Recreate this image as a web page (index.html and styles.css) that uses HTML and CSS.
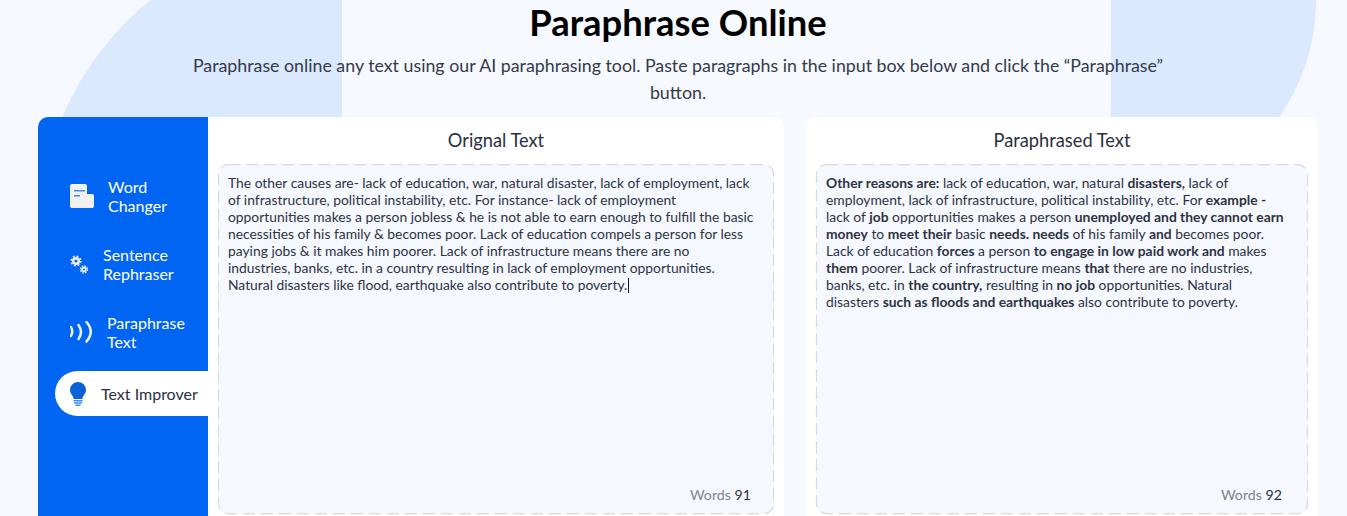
FILE: index.html
```html
<!DOCTYPE html>
<html lang="en">
<head>
<meta charset="utf-8">
<title>Paraphrase Online</title>
<link rel="stylesheet" href="styles.css">
</head>
<body>
<div class="blob blob-left"></div>
<div class="blob blob-right"></div>
<main class="page">
  <header class="hero">
    <h1>Paraphrase Online</h1>
    <p>Paraphrase online any text using our AI paraphrasing tool. Paste paragraphs in the input box below and click the “Paraphrase” button.</p>
  </header>
  <section class="tool">
    <div class="card card-left">
      <nav class="side">
        <a class="item item-word">
          <svg class="ic" width="24" height="24" viewBox="0 0 24 24"><path fill="#f1f1f1" d="M2 0h13a2 2 0 0 1 2 2v8h5a2 2 0 0 1 2 2v10a2 2 0 0 1-2 2H2a2 2 0 0 1-2-2V2a2 2 0 0 1 2-2z"/><path fill="#3f8cf5" d="M4 6h11v1.500H4zM4 11h6v1.500H4z"/></svg>
          <span>Word<br>Changer</span>
        </a>
        <a class="item item-sent">
          <svg class="ic" width="19" height="19" viewBox="0 0 19 19"><g fill="none" stroke="#f1f1f1"><circle cx="6" cy="6" r="2.800" stroke-width="2.400"/><circle cx="6" cy="6" r="4.800" stroke-width="1.600" stroke-dasharray="1.900 1.870"/><circle cx="14" cy="14.500" r="1.900" stroke-width="1.800"/><circle cx="14" cy="14.500" r="3.500" stroke-width="1.400" stroke-dasharray="1.600 1.150"/></g></svg>
          <span>Sentence<br>Rephraser</span>
        </a>
        <a class="item item-para">
          <svg class="ic" width="23" height="22" viewBox="0 0 23 22"><g fill="none" stroke="#f1f1f1" stroke-width="2.500" stroke-linecap="round"><path d="M1 6q2.500 4.500 0 9"/><path d="M8.500 4q5 7 0 14"/><path d="M16.500 1q8.500 9.750 0 19.500"/></g></svg>
          <span>Paraphrase<br>Text</span>
        </a>
        <a class="item active">
          <svg class="ic" width="16" height="24" viewBox="0 0 16 24"><path fill="#0a62d8" d="M8 0a8 8 0 0 1 8 8c0 3.500-3 5.500-3.800 9H3.800C3 13.500 0 11.500 0 8a8 8 0 0 1 8-8z"/><path fill="#3f8cf5" d="M3.500 18h9v1.500h-9zM4 20.200h8v1.500H4zM5.500 22.400h5V24h-5z"/></svg>
          <span>Text Improver</span>
        </a>
      </nav>
      <div class="pane">
        <h2>Orignal Text</h2>
        <div class="box box-source">
          <svg class="dash" aria-hidden="true"><rect x="0.500" y="0.500" width="100%" height="100%" rx="10" ry="10"/></svg>
          <p>The other causes are- lack of education, war, natural disaster, lack of employment, lack of infrastructure, political instability, etc. For instance- lack of employment opportunities makes a person jobless &amp; he is not able to earn enough to fulfill the basic necessities of his family &amp; becomes poor. Lack of education compels a person for less paying jobs &amp; it makes him poorer. Lack of infrastructure means there are no industries, banks, etc. in a country resulting in lack of employment opportunities. Natural disasters like flood, earthquake also contribute to poverty.<span class="caret"></span></p>
          <div class="count count-left">Words <b>91</b></div>
        </div>
      </div>
    </div>
    <div class="card card-right">
      <div class="pane">
        <h2>Paraphrased Text</h2>
        <div class="box">
          <svg class="dash" aria-hidden="true"><rect x="0.500" y="0.500" width="100%" height="100%" rx="10" ry="10"/></svg>
          <p><strong>Other reasons are:</strong> lack of education, war, natural <strong>disasters,</strong> lack of employment, lack of infrastructure, political instability, etc. For <strong>example -</strong> lack of <strong>job</strong> opportunities makes a person <strong>unemployed and they cannot earn money</strong> to <strong>meet their</strong> basic <strong>needs. needs</strong> of his family <strong>and</strong> becomes poor. Lack of education <strong>forces</strong> a person <strong>to engage in low paid work and</strong> makes <strong>them</strong> poorer. Lack of infrastructure means <strong>that</strong> there are no industries, banks, etc. in <strong>the country,</strong> resulting in <strong>no job</strong> opportunities. Natural disasters <strong>such as floods and earthquakes</strong> also contribute to poverty.</p>
          <div class="count count-right">Words <b>92</b></div>
        </div>
      </div>
    </div>
  </section>
</main>
</body>
</html>
```
FILE: styles.css
```css
* { box-sizing: border-box; }
html, body { margin: 0; height: 516px; overflow: hidden; }
body { background: #f6f9ff; font-family: Lato, "Liberation Sans", sans-serif; color: #2b3040; position: relative; }
.blob { position: absolute; background: #dbe9fe; }
.blob-left { left: 38px; top: -68px; width: 304px; height: 304px; border-radius: 304px 0 0 0; }
.blob-right { left: 1111px; top: 0; width: 205px; height: 205px; border-radius: 0 0 205px 0; }
.page { position: relative; padding: 0 29px 0 38px; }
.hero { text-align: center; height: 117px; }
.hero h1 { margin: 0; font-size: 36.400px; line-height: 44px; font-weight: 700; color: #000; }
.hero p { margin: 8px auto 0; width: 1000px; font-size: 17.800px; line-height: 27px; color: #333a48; }
.tool { display: flex; gap: 22px; align-items: flex-start; }
.card { background: #fff; border-radius: 10px; height: 420px; display: flex; overflow: hidden; }
.card-left { width: 746px; }
.card-right { width: 512px; }
.side { width: 170px; flex: none; background: #0065f2; padding-top: 60px; display: flex; flex-direction: column; }
.item { display: flex; align-items: center; color: #fff; font-size: 16px; line-height: 19px; height: 38px; margin-left: 32px; }
.item-word { margin-bottom: 30px; gap: 14px; }
.item-sent { margin-bottom: 30px; gap: 14px; }
.item-para { margin-bottom: 20px; gap: 14px; }
.active { margin-left: 17px; height: 45px; background: #fff; color: #2b3040; border-radius: 22.500px 0 0 22.500px; padding-left: 15px; gap: 15px; }
.ic { flex: none; }
.pane { flex: 1; padding: 0 10px; min-width: 0; }
.pane h2 { margin: 0; height: 47px; font-size: 18.250px; line-height: 47px; font-weight: 400; text-align: center; color: #2b3040; }
.box { position: relative; height: 350px; background: #f5f8ff; border-radius: 10px; padding: 10px 21px 10px 10px; }
.box-source { padding-right: 19.500px; }
.dash { position: absolute; left: 0; top: 0; width: 100%; height: 100%; overflow: visible; }
.dash rect { width: calc(100% - 1px); height: calc(100% - 1px); fill: none; stroke: #dadadd; stroke-width: 1.250px; stroke-dasharray: 12 6; }
.box p { position: relative; margin: 0; font-size: 13.850px; line-height: 17px; color: #2e3342; }
.box strong { font-weight: 700; }
.caret { display: inline-block; width: 1px; height: 15px; margin-left: 1px; background: #111; vertical-align: -3px; }
.count { position: absolute; bottom: 11px; font-size: 14.200px; line-height: 17px; color: #80848f; }
.count b { font-weight: 400; color: #2b3040; }
.count-left { right: 23px; }
.count-right { right: 26px; }
```
